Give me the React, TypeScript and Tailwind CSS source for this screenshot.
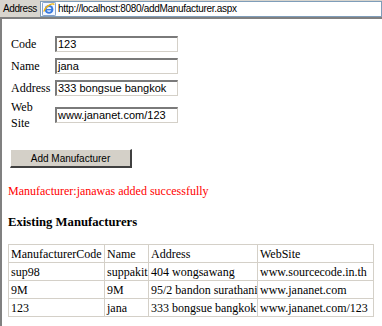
import React from "react";

const serif = { fontFamily: '"Liberation Serif", "Times New Roman", serif' };
const sans = { fontFamily: '"Liberation Sans", Arial, sans-serif' };

function IeIcon() {
  return (
    <svg width="14" height="14" viewBox="0 0 16 16">
      <rect x="0.5" y="0.5" width="15" height="15" rx="1" fill="#f4f8ff" stroke="#6c8fc4" />
      <circle cx="8" cy="8.5" r="5" fill="#3a7be0" />
      <circle cx="8" cy="8.5" r="2.8" fill="#e8f1ff" />
      <rect x="4" y="8" width="8" height="1.6" fill="#3a7be0" />
      <path d="M2 11 C5 3, 13 1, 14 3" stroke="#f2b30f" strokeWidth="1.4" fill="none" />
    </svg>
  );
}

function Field({ value }: { value: string }) {
  return (
    <div
      className="w-[123px] h-[16px] bg-white border-t-2 border-l-2 border-b border-r border-t-[#7a7a7a] border-l-[#7a7a7a] border-b-[#d4d0c8] border-r-[#d4d0c8] text-[11px] leading-[13px] pl-[1px] text-black whitespace-nowrap overflow-hidden"
      style={sans}
    >
      {value}
    </div>
  );
}

const rows = [
  ["sup98", "suppakit", "404 wongsawang", "www.sourcecode.in.th"],
  ["9M", "9M", "95/2 bandon surathani", "www.jananet.com"],
  ["123", "jana", "333 bongsue bangkok", "www.jananet.com/123"],
];

export default function App() {
  return (
    <div className="w-[382px] h-[326px] overflow-hidden flex flex-col bg-[#d4d0c8]">
      <div className="h-[17px] flex items-center bg-[#d8d5ce]">
        <div className="w-[40px] pl-[3px] text-[10px] tracking-[-0.4px] text-black" style={sans}>
          Address
        </div>
        <div className="flex-1 h-[16px] bg-white border border-[#7f9db9] flex items-center pl-[1px] gap-[2px]">
          <IeIcon />
          <span className="text-[10px] tracking-[-0.3px] text-black" style={sans}>
            http://localhost:8080/addManufacturer.aspx
          </span>
        </div>
      </div>
      <div className="flex-1 bg-white border-t-2 border-l-2 border-t-[#808080] border-l-[#808080] pl-[6px] pt-[14px] text-black" style={serif}>
        <div className="grid grid-cols-[41px_123px] grid-rows-[22px_22px_22px_32px] gap-x-[3px] pl-[3px] items-center text-[12px]">
          <div>Code</div>
          <Field value="123" />
          <div>Name</div>
          <Field value="jana" />
          <div>Address</div>
          <Field value="333 bongsue bangkok" />
          <div className="leading-[16px]">
            Web
            <br />
            Site
          </div>
          <Field value="www.jananet.com/123" />
        </div>
        <div className="mt-[18px] ml-[2px] w-[122px] h-[19px] bg-[#d4d0c8] border-t border-l border-t-white border-l-white border-b-2 border-r-2 border-b-[#404040] border-r-[#404040] flex items-center justify-center text-[10px] text-black" style={sans}>
          Add Manufacturer
        </div>
        <div className="mt-[16px] text-[12px] leading-[14px] text-[#ff0000]">Manufacturer:janawas added successfully</div>
        <div className="mt-[17px] text-[12.7px] leading-[14px] font-bold">Existing Manufacturers</div>
        <table className="mt-[15px] border-collapse table-fixed w-[365px] text-[12px] border border-[#a0a0a0]" style={serif}>
          <colgroup>
            <col className="w-[96px]" />
            <col className="w-[44px]" />
            <col className="w-[109px]" />
            <col className="w-[116px]" />
          </colgroup>
          <tbody>
            <tr>
              <td className="border border-[#d4d0c8] px-[2px] h-[18px] leading-[14px] whitespace-nowrap">ManufacturerCode</td>
              <td className="border border-[#d4d0c8] px-[2px] leading-[14px]">Name</td>
              <td className="border border-[#d4d0c8] px-[2px] leading-[14px]">Address</td>
              <td className="border border-[#d4d0c8] px-[2px] leading-[14px]">WebSite</td>
            </tr>
            {rows.map((r, i) => (
              <tr key={i}>
                {r.map((c, j) => (
                  <td key={j} className="border border-[#d4d0c8] px-[2px] h-[18px] leading-[14px] whitespace-nowrap overflow-hidden">
                    {c}
                  </td>
                ))}
              </tr>
            ))}
          </tbody>
        </table>
      </div>
    </div>
  );
}
